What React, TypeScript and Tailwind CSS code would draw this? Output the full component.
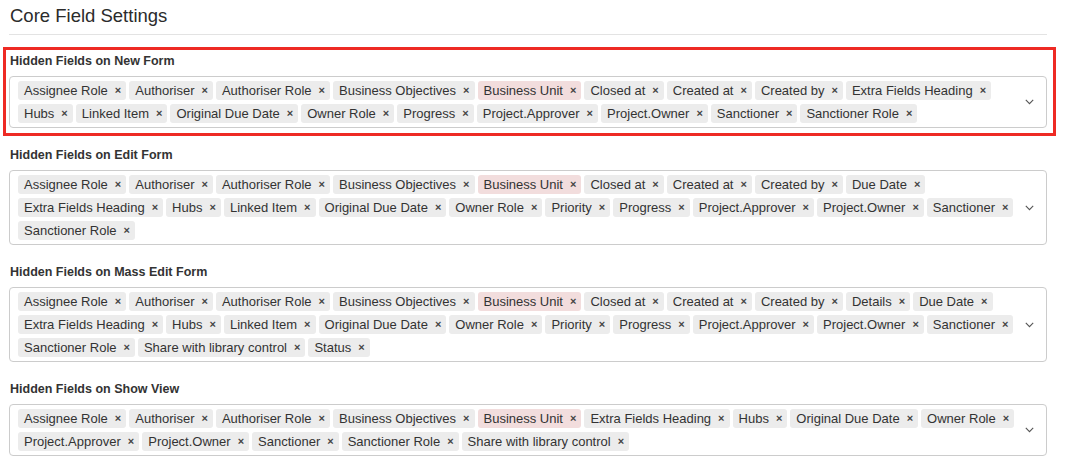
import React from 'react';

// Rows are kept as they appear in the screenshot so wrapping matches exactly
type Section = {
  label: string;
  rows: string[][];
};

const HIGHLIGHTED = 'Business Unit';

const sections: Section[] = [
  {
    label: 'Hidden Fields on New Form',
    rows: [
      ['Assignee Role', 'Authoriser', 'Authoriser Role', 'Business Objectives', 'Business Unit', 'Closed at', 'Created at', 'Created by', 'Extra Fields Heading'],
      ['Hubs', 'Linked Item', 'Original Due Date', 'Owner Role', 'Progress', 'Project.Approver', 'Project.Owner', 'Sanctioner', 'Sanctioner Role'],
    ],
  },
  {
    label: 'Hidden Fields on Edit Form',
    rows: [
      ['Assignee Role', 'Authoriser', 'Authoriser Role', 'Business Objectives', 'Business Unit', 'Closed at', 'Created at', 'Created by', 'Due Date'],
      ['Extra Fields Heading', 'Hubs', 'Linked Item', 'Original Due Date', 'Owner Role', 'Priority', 'Progress', 'Project.Approver', 'Project.Owner', 'Sanctioner'],
      ['Sanctioner Role'],
    ],
  },
  {
    label: 'Hidden Fields on Mass Edit Form',
    rows: [
      ['Assignee Role', 'Authoriser', 'Authoriser Role', 'Business Objectives', 'Business Unit', 'Closed at', 'Created at', 'Created by', 'Details', 'Due Date'],
      ['Extra Fields Heading', 'Hubs', 'Linked Item', 'Original Due Date', 'Owner Role', 'Priority', 'Progress', 'Project.Approver', 'Project.Owner', 'Sanctioner'],
      ['Sanctioner Role', 'Share with library control', 'Status'],
    ],
  },
  {
    label: 'Hidden Fields on Show View',
    rows: [
      ['Assignee Role', 'Authoriser', 'Authoriser Role', 'Business Objectives', 'Business Unit', 'Extra Fields Heading', 'Hubs', 'Original Due Date', 'Owner Role'],
      ['Project.Approver', 'Project.Owner', 'Sanctioner', 'Sanctioner Role', 'Share with library control'],
    ],
  },
];

const Tag: React.FC<{ name: string }> = ({ name }) => (
  <span
    className={`flex items-center h-[19px] pl-[6px] pr-[5px] rounded-[3px] text-[13px] leading-[19px] whitespace-nowrap ${
      name === HIGHLIGHTED ? 'bg-[#f2dddd]' : 'bg-[#ececec]'
    }`}
  >
    {name}
    <span className="ml-[7px] text-[11px] font-bold text-[#444]">×</span>
  </span>
);

const MultiSelect: React.FC<{ rows: string[][] }> = ({ rows }) => (
  <div className="flex items-center border border-[#cccccc] rounded-[4px] pl-[8px] py-[4px] bg-white">
    <div className="flex-1 flex flex-col gap-[4px]">
      {rows.map((row, i) => (
        <div key={i} className="flex gap-[3px]">
          {row.map((name) => (
            <Tag key={name} name={name} />
          ))}
        </div>
      ))}
    </div>
    <div className="pr-[12px] pl-[8px] flex items-center">
      <svg width="9" height="6" viewBox="0 0 9 6" fill="none">
        <polyline points="0.8,0.8 4.5,4.6 8.2,0.8" stroke="#555" strokeWidth="1.1" />
      </svg>
    </div>
  </div>
);

export default function App() {
  return (
    <div className="relative w-[1065px] h-[467px] overflow-hidden bg-white pl-[9px] pr-[18px] text-[#333] font-['Liberation_Sans',Arial,sans-serif]">
      <h2 className="pt-[4px] pb-[6px] pl-px text-[18.5px] leading-6 font-medium text-[#2b2b2b] border-b border-[#e3e3e3]">
        Core Field Settings
      </h2>

      <div className="mt-[18px] flex flex-col gap-[19px]">
        {sections.map((s) => (
          <div key={s.label}>
            <div className="pl-px mb-[7px] text-[12.5px] leading-4 font-bold">{s.label}</div>
            <MultiSelect rows={s.rows} />
          </div>
        ))}
      </div>

      {/* annotation box around the first field */}
      <div className="absolute left-[3px] top-[47px] w-[1053px] h-[89px] border-[3px] border-[#ee2a24] pointer-events-none" />
    </div>
  );
}
